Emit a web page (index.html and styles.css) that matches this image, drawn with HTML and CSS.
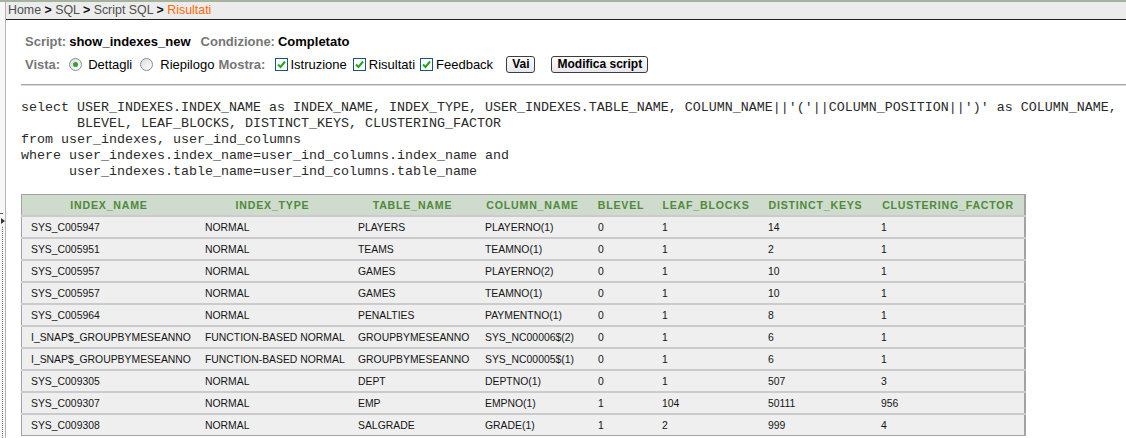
FILE: index.html
```html
<!DOCTYPE html>
<html lang="it">
<head>
<meta charset="utf-8">
<title>Risultati</title>
<link rel="stylesheet" href="styles.css">
</head>
<body>
<div class="topline"></div>
<div class="layout">
  <div class="splitter">
    <span class="dash"></span>
    <span class="arrow"></span>
    <span class="dots"></span>
  </div>
  <main class="main">
    <div class="crumbs">Home <b>&gt;</b> SQL <b>&gt;</b> Script SQL <b>&gt;</b> <span class="current">Risultati</span></div>
    <div class="form">
      <div class="row">
        <span class="label">Script:</span><span class="value">show_indexes_new</span>
        <span class="label gap10">Condizione:</span><span class="value">Completato</span>
      </div>
      <div class="row row2">
        <span class="label">Vista:</span>
        <span class="radio checked m9"></span><span class="opt m6">Dettagli</span>
        <span class="radio m8"></span><span class="opt m7">Riepilogo</span>
        <span class="label m4">Mostra:</span>
        <span class="check m10"><svg viewBox="0 0 11 11" width="11" height="11"><path d="M2 5.5 L4.5 8 L9 2.5" fill="none" stroke="#1fa81f" stroke-width="2"/></svg></span><span class="opt m2">Istruzione</span>
        <span class="check m6"><svg viewBox="0 0 11 11" width="11" height="11"><path d="M2 5.5 L4.5 8 L9 2.5" fill="none" stroke="#1fa81f" stroke-width="2"/></svg></span><span class="opt m3">Risultati</span>
        <span class="check m5"><svg viewBox="0 0 11 11" width="11" height="11"><path d="M2 5.5 L4.5 8 L9 2.5" fill="none" stroke="#1fa81f" stroke-width="2"/></svg></span><span class="opt m3">Feedback</span>
        <button class="btn m13">Vai</button>
        <button class="btn m16">Modifica script</button>
      </div>
    </div>
    <div class="sep"></div>
<pre class="sql">select USER_INDEXES.INDEX_NAME as INDEX_NAME, INDEX_TYPE, USER_INDEXES.TABLE_NAME, COLUMN_NAME||'('||COLUMN_POSITION||')' as COLUMN_NAME,
       BLEVEL, LEAF_BLOCKS, DISTINCT_KEYS, CLUSTERING_FACTOR
from user_indexes, user_ind_columns
where user_indexes.index_name=user_ind_columns.index_name and
      user_indexes.table_name=user_ind_columns.table_name</pre>
    <table class="results">
      <thead>
        <tr><th>INDEX_NAME</th><th>INDEX_TYPE</th><th>TABLE_NAME</th><th>COLUMN_NAME</th><th>BLEVEL</th><th>LEAF_BLOCKS</th><th>DISTINCT_KEYS</th><th>CLUSTERING_FACTOR</th></tr>
      </thead>
      <tbody>
        <tr><td>SYS_C005947</td><td>NORMAL</td><td>PLAYERS</td><td>PLAYERNO(1)</td><td>0</td><td>1</td><td>14</td><td>1</td></tr>
        <tr><td>SYS_C005951</td><td>NORMAL</td><td>TEAMS</td><td>TEAMNO(1)</td><td>0</td><td>1</td><td>2</td><td>1</td></tr>
        <tr><td>SYS_C005957</td><td>NORMAL</td><td>GAMES</td><td>PLAYERNO(2)</td><td>0</td><td>1</td><td>10</td><td>1</td></tr>
        <tr><td>SYS_C005957</td><td>NORMAL</td><td>GAMES</td><td>TEAMNO(1)</td><td>0</td><td>1</td><td>10</td><td>1</td></tr>
        <tr><td>SYS_C005964</td><td>NORMAL</td><td>PENALTIES</td><td>PAYMENTNO(1)</td><td>0</td><td>1</td><td>8</td><td>1</td></tr>
        <tr><td>I_SNAP$_GROUPBYMESEANNO</td><td>FUNCTION-BASED NORMAL</td><td>GROUPBYMESEANNO</td><td>SYS_NC00006$(2)</td><td>0</td><td>1</td><td>6</td><td>1</td></tr>
        <tr><td>I_SNAP$_GROUPBYMESEANNO</td><td>FUNCTION-BASED NORMAL</td><td>GROUPBYMESEANNO</td><td>SYS_NC00005$(1)</td><td>0</td><td>1</td><td>6</td><td>1</td></tr>
        <tr><td>SYS_C009305</td><td>NORMAL</td><td>DEPT</td><td>DEPTNO(1)</td><td>0</td><td>1</td><td>507</td><td>3</td></tr>
        <tr><td>SYS_C009307</td><td>NORMAL</td><td>EMP</td><td>EMPNO(1)</td><td>1</td><td>104</td><td>50111</td><td>956</td></tr>
        <tr><td>SYS_C009308</td><td>NORMAL</td><td>SALGRADE</td><td>GRADE(1)</td><td>1</td><td>2</td><td>999</td><td>4</td></tr>
      </tbody>
    </table>
  </main>
</div>
</body>
</html>
```

FILE: styles.css
```css
html, body {
  margin: 0;
  padding: 0;
  background: #ffffff;
  font-family: "Liberation Sans", Arial, sans-serif;
  overflow: hidden;
}

.topline {
  height: 2px;
  background: #a3b39d;
}

.layout {
  display: flex;
  min-height: 436px;
}

.splitter {
  width: 5px;
  border-right: 1px solid #b4b4b4;
  display: flex;
  flex-direction: column;
  align-items: flex-start;
  background: #f7f7f7;
}

.splitter .dash {
  margin-top: 211px;
  width: 3px;
  height: 1px;
  background: #555;
}

.splitter .arrow {
  margin-top: 4px;
  margin-left: 1px;
  width: 0;
  height: 0;
  border-top: 3px solid transparent;
  border-bottom: 3px solid transparent;
  border-left: 4px solid #333;
}

.splitter .dots {
  margin-top: 3px;
  margin-left: 2px;
  width: 0;
  flex: 1;
  border-left: 1px dotted #666;
}

.main {
  flex: 1;
  min-width: 0;
}

.crumbs {
  height: 17px;
  line-height: 17px;
  background: #ececec;
  border-bottom: 1px solid #222;
  padding-left: 2px;
  font-size: 12.4px;
  color: #4e4e4e;
}

.crumbs b {
  color: #111;
}

.crumbs .current {
  color: #ff6a00;
}

.form {
  padding: 11px 0 0 19px;
  font-size: 13px;
}

.row {
  display: flex;
  align-items: center;
  height: 20px;
}

.row2 {
  margin-top: 3px;
}

.label {
  font-weight: bold;
  color: #767676;
}

.value {
  font-weight: bold;
  color: #000;
  margin-left: 3px;
}

.opt {
  color: #000;
}

.gap10 { margin-left: 10px; }
.m2 { margin-left: 2px; }
.m3 { margin-left: 3px; }
.m4 { margin-left: 4px; }
.m5 { margin-left: 5px; }
.m6 { margin-left: 6px; }
.m7 { margin-left: 7px; }
.m8 { margin-left: 8px; }
.m9 { margin-left: 9px; }
.m10 { margin-left: 10px; }
.m13 { margin-left: 13px; }
.m16 { margin-left: 16px; }

.radio {
  width: 13px;
  height: 13px;
  box-sizing: border-box;
  border: 1px solid #7f8f9d;
  border-radius: 50%;
  background: linear-gradient(135deg, #dcdcdc, #ffffff);
  display: inline-flex;
  align-items: center;
  justify-content: center;
}

.radio.checked::after {
  content: "";
  width: 5px;
  height: 5px;
  border-radius: 50%;
  background: #33a033;
}

.check {
  width: 13px;
  height: 13px;
  box-sizing: border-box;
  border: 1px solid #1c5180;
  background: #fff;
  display: inline-flex;
  align-items: center;
  justify-content: center;
}

.check svg {
  display: block;
}

.btn {
  height: 17px;
  padding: 0 5px;
  font-family: "Liberation Sans", Arial, sans-serif;
  font-size: 12px;
  font-weight: bold;
  color: #000;
  border: 1px solid #3d3d3d;
  border-radius: 3px;
  background: linear-gradient(#ffffff, #e6e6ee);
  line-height: 15px;
}

.sep {
  margin: 10px 0 0 15px;
  height: 1px;
  background: #a8a8a8;
  border-bottom: 1px solid #d8d8d8;
}

.sql {
  margin: 14px 0 0 15px;
  font-family: "Liberation Mono", "Courier New", monospace;
  font-size: 13.333px;
  line-height: 16px;
  color: #2a2a2a;
}

.results {
  margin: 14px 0 0 15px;
  border-collapse: collapse;
  border: 1px solid #a3a3a3;
  border-right-width: 2px;
  table-layout: fixed;
  width: 1004px;
  font-size: 10.4px;
}

.results th {
  height: 20px;
  padding: 0;
  background: #cfdbcd;
  color: #4e8a39;
  font-weight: bold;
  font-size: 10.6px;
  letter-spacing: 0.8px;
  text-align: center;
  white-space: nowrap;
}

.results td {
  height: 20px;
  padding: 0 0 0 9px;
  background: #efefef;
  color: #151515;
  border-top: 2px solid #cbcbcb;
  white-space: nowrap;
  overflow: hidden;
}

.results th:nth-child(1), .results td:nth-child(1) { width: 174px; }
.results th:nth-child(2), .results td:nth-child(2) { width: 153px; }
.results th:nth-child(3), .results td:nth-child(3) { width: 127px; }
.results th:nth-child(4), .results td:nth-child(4) { width: 113px; }
.results th:nth-child(5), .results td:nth-child(5) { width: 64px; }
.results th:nth-child(6), .results td:nth-child(6) { width: 106px; }
.results th:nth-child(7), .results td:nth-child(7) { width: 113px; }
.results th:nth-child(8), .results td:nth-child(8) { width: 152px; }
```
